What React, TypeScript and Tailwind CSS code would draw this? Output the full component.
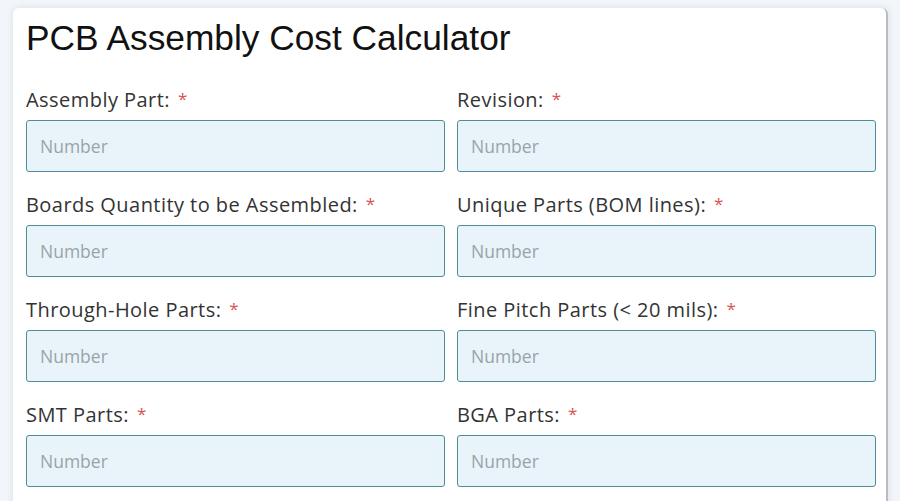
import React from "react";

const fields: [string, string][] = [
  ["Assembly Part:", "Revision:"],
  ["Boards Quantity to be Assembled:", "Unique Parts (BOM lines):"],
  ["Through-Hole Parts:", "Fine Pitch Parts (< 20 mils):"],
  ["SMT Parts:", "BGA Parts:"],
];

function Field({ label }: { label: string }) {
  return (
    <div className="flex flex-col">
      <label className="h-[28px] leading-[28px] mb-[6px] text-[20px] tracking-[0.45px] text-[#333333] whitespace-nowrap" style={{ fontFamily: "'Open Sans', 'Noto Sans', sans-serif" }}>
        {label}
        <span className="text-[#d9534f] text-[17px] ml-[8px] relative top-[-2px]">*</span>
      </label>
      <input
        type="text"
        placeholder="Number"
        className="h-[52px] w-full rounded-[3px] border border-[#4f8e99] bg-[#e8f4f9] px-[13px] text-[17.5px] text-[#333] placeholder:text-[#9aa3a8] outline-none"
        style={{ fontFamily: "'Open Sans', 'Noto Sans', sans-serif" }}
      />
    </div>
  );
}

export default function App() {
  return (
    <div className="w-[900px] h-[501px] overflow-hidden bg-[#f2f5f9] pl-[13px] pr-[12px] pt-[8px]">
      <div className="bg-white rounded-[6px] border-r-2 border-[#b9bcc0] shadow-[0_0_6px_rgba(180,195,215,0.45)] pl-[13px] pr-[10px] pt-[10px] pb-[20px] h-[600px]">
        <h1 className="h-[40px] leading-[40px] text-[35.3px] text-[#111] mb-[28px]" style={{ fontFamily: "'Liberation Sans', Arial, sans-serif" }}>
          PCB Assembly Cost Calculator
        </h1>
        <div className="grid grid-cols-2 gap-x-[12px] gap-y-[19px]">
          {fields.flat().map((f) => (
            <Field key={f} label={f} />
          ))}
        </div>
      </div>
    </div>
  );
}
